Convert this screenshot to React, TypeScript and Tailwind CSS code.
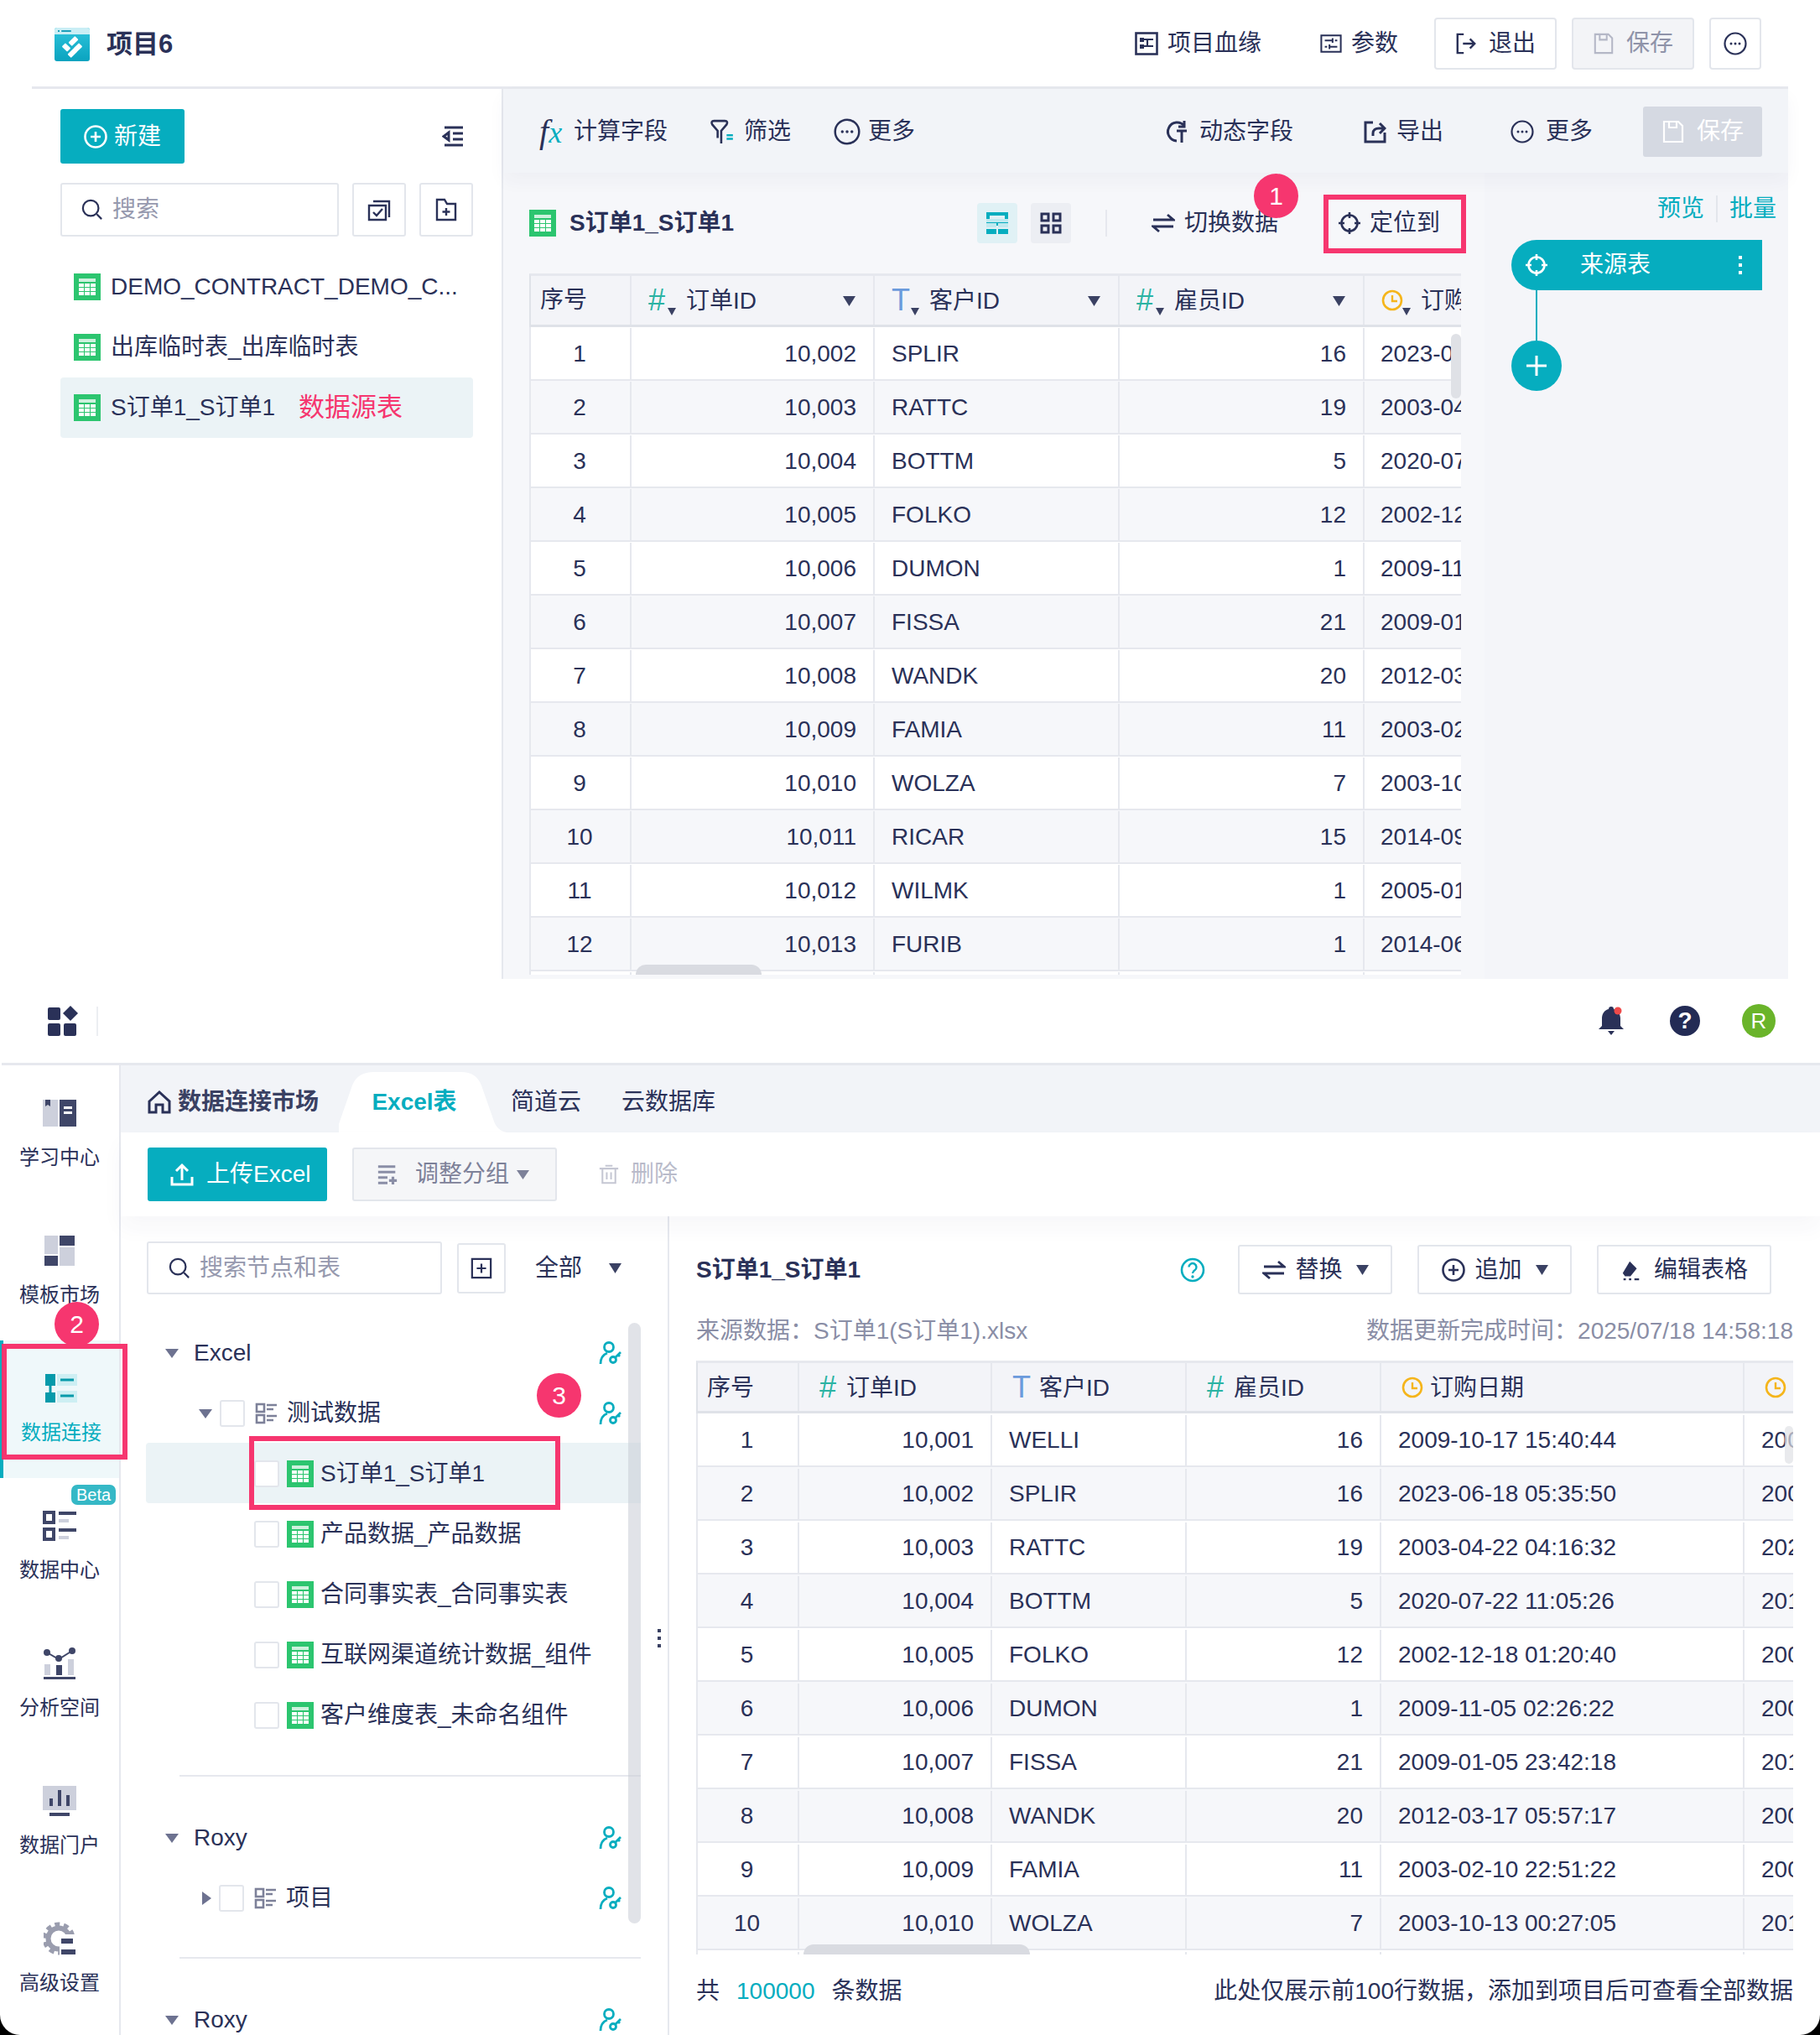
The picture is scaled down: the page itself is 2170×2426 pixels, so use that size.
import React from "react";

const NAVY = "#2a3158";
const TEAL = "#06adbf";

const topRows = [
  ["1", "10,002", "SPLIR", "16", "2023-06"],
  ["2", "10,003", "RATTC", "19", "2003-04"],
  ["3", "10,004", "BOTTM", "5", "2020-07"],
  ["4", "10,005", "FOLKO", "12", "2002-12"],
  ["5", "10,006", "DUMON", "1", "2009-11"],
  ["6", "10,007", "FISSA", "21", "2009-01"],
  ["7", "10,008", "WANDK", "20", "2012-03"],
  ["8", "10,009", "FAMIA", "11", "2003-02"],
  ["9", "10,010", "WOLZA", "7", "2003-10"],
  ["10", "10,011", "RICAR", "15", "2014-09"],
  ["11", "10,012", "WILMK", "1", "2005-01"],
  ["12", "10,013", "FURIB", "1", "2014-06"],
  ["", "", "", "", ""],
];

const bottomRows = [
  ["1", "10,001", "WELLI", "16", "2009-10-17 15:40:44", "200"],
  ["2", "10,002", "SPLIR", "16", "2023-06-18 05:35:50", "200"],
  ["3", "10,003", "RATTC", "19", "2003-04-22 04:16:32", "202"],
  ["4", "10,004", "BOTTM", "5", "2020-07-22 11:05:26", "201"],
  ["5", "10,005", "FOLKO", "12", "2002-12-18 01:20:40", "200"],
  ["6", "10,006", "DUMON", "1", "2009-11-05 02:26:22", "200"],
  ["7", "10,007", "FISSA", "21", "2009-01-05 23:42:18", "201"],
  ["8", "10,008", "WANDK", "20", "2012-03-17 05:57:17", "200"],
  ["9", "10,009", "FAMIA", "11", "2003-02-10 22:51:22", "200"],
  ["10", "10,010", "WOLZA", "7", "2003-10-13 00:27:05", "201"],
  ["", "", "", "", "", ""],
];

function Caret({ w = 15, h = 12, color = "#3a4163", dir = "down" }: { w?: number; h?: number; color?: string; dir?: string }) {
  return (
    <svg width={w} height={h} viewBox="0 0 10 10" preserveAspectRatio="none" className="shrink-0">
      <polygon points={dir === "down" ? "0,0 10,0 5,10" : "0,0 10,5 0,10"} fill={color} />
    </svg>
  );
}

function SheetIcon({ size = 32 }: { size?: number }) {
  return (
    <svg width={size} height={size} viewBox="0 0 32 32" className="shrink-0">
      <rect width="32" height="32" fill="#2cc56f" />
      <rect x="6" y="6" width="20" height="4" fill="#cdf1dd" />
      <rect x="6" y="12" width="6" height="4" fill="#fff" />
      <rect x="13" y="12" width="6" height="4" fill="#fff" />
      <rect x="20" y="12" width="6" height="4" fill="#fff" />
      <rect x="6" y="17" width="6" height="4" fill="#fff" />
      <rect x="13" y="17" width="6" height="4" fill="#fff" />
      <rect x="20" y="17" width="6" height="4" fill="#fff" />
      <rect x="6" y="22" width="6" height="4" fill="#fff" />
      <rect x="13" y="22" width="6" height="4" fill="#fff" />
      <rect x="20" y="22" width="6" height="4" fill="#fff" />
    </svg>
  );
}

function Logo() {
  return (
    <svg width="42" height="40" viewBox="0 0 42 40" className="mt-[3px] shrink-0">
      <defs>
        <linearGradient id="logoBody" x1="0" y1="0" x2="0" y2="1">
          <stop offset="0" stopColor="#2ec4dc" />
          <stop offset="1" stopColor="#0aa3bf" />
        </linearGradient>
      </defs>
      <rect width="42" height="40" rx="3" fill="url(#logoBody)" />
      <path d="M0 3a3 3 0 0 1 3-3h36a3 3 0 0 1 3 3v5H0z" fill="#c9eef5" />
      <rect x="4" y="3" width="2" height="2" fill="#1b9fba" />
      <rect x="8" y="3" width="12" height="2" rx="1" fill="#1b9fba" />
      <g fill="#fff">
        <rect x="17" y="13" width="11" height="6" rx="1" transform="rotate(-45 22.500 16)" />
        <rect x="11" y="19" width="6" height="9" rx="1" transform="rotate(-45 14 23.500)" />
        <rect x="25" y="19" width="6" height="9" rx="1" transform="rotate(45 28 23.500)" />
        <rect x="16" y="27" width="11" height="6" rx="1" transform="rotate(-45 21.500 30)" />
      </g>
    </svg>
  );
}

function Glyph({ name, size = 28, color = NAVY }: { name: string; size?: number; color?: string }) {
  const s = { fill: "none", stroke: color, strokeWidth: 2.2 };
  let body: React.ReactNode = null;
  if (name === "more") {
    body = (
      <>
        <circle cx="14" cy="14" r="12.5" {...s} />
        <circle cx="9" cy="14" r="1.5" fill={color} />
        <circle cx="14" cy="14" r="1.5" fill={color} />
        <circle cx="19" cy="14" r="1.5" fill={color} />
      </>
    );
  } else if (name === "plusCircle") {
    body = (
      <>
        <circle cx="14" cy="14" r="12.5" {...s} strokeWidth={2.6} />
        <path d="M14 8v12M8 14h12" {...s} strokeWidth={2.6} />
      </>
    );
  } else if (name === "lineage") {
    body = (
      <>
        <rect x="1.5" y="1.5" width="25" height="25" {...s} strokeWidth={2.6} />
        <rect x="6" y="7" width="5" height="5" fill={color} />
        <rect x="6" y="15" width="5" height="5" fill={color} />
        <path d="M11 9h11M11 17h11M15 9v8" {...s} />
      </>
    );
  } else if (name === "params") {
    body = (
      <>
        <rect x="1.5" y="3.5" width="25" height="21" {...s} />
        <path d="M6 10h10M19 10h3M6 18h3M12 18h10M16 7v6M12 15v6" {...s} />
      </>
    );
  } else if (name === "exit") {
    body = <path d="M11 2H3v24h8M10 14h15M19 8l6 6-6 6" {...s} strokeWidth={2.6} />;
  } else if (name === "save") {
    body = <path d="M3 2h17l5 5v19H3zM9 2v7h9V2" {...s} />;
  } else if (name === "filter") {
    body = (
      <>
        <path d="M5 2h12q4 0 2 4l-6 7v14M5 2q-4 0-2 4l6 7v8" {...s} strokeWidth={2.4} />
        <path d="M19 18h7M19 22h7" fill="none" stroke={TEAL} strokeWidth="2.4" />
      </>
    );
  } else if (name === "dynamic") {
    body = (
      <>
        <path d="M23 7a11 11 0 1 0-9 18" {...s} strokeWidth={3} />
        <path d="M14 13h12M20 13v14M23 1v7h-7" {...s} strokeWidth={3} />
      </>
    );
  } else if (name === "export") {
    body = <path d="M12 3H3v23h23V15M12 19v-3c0-4 3-6 7-6h6M20 4l6 6-6 6" {...s} strokeWidth={3} />;
  } else if (name === "swap") {
    body = <path d="M2 10h24l-7-6M26 18H2l7 6" {...s} strokeWidth={2.8} />;
  } else if (name === "locate") {
    body = (
      <>
        <circle cx="14" cy="14" r="9.5" {...s} strokeWidth={2.6} />
        <path d="M14 1v7M14 20v7M1 14h7M20 14h7" {...s} strokeWidth={2.6} />
      </>
    );
  } else if (name === "search") {
    body = <path d="M20 20l6 6M22 12a10 10 0 1 1-20 0a10 10 0 0 1 20 0z" {...s} strokeWidth={2.4} />;
  } else if (name === "collapse") {
    body = <path d="M3 3h22M13 10h12M13 17h12M3 24h22M8 9l-6 4.500 6 4.500z" {...s} strokeWidth={3} />;
  } else if (name === "check") {
    body = <path d="M7 4h19v19M2 9h20v17H2zM7 17l4 4 7-8" {...s} strokeWidth={2.4} />;
  } else if (name === "newFolder") {
    body = <path d="M3 2h9l3 5h10v19H3zM14 12v9M9.500 16.500h9" {...s} strokeWidth={2.4} />;
  } else if (name === "group") {
    body = (
      <>
        <rect x="2" y="3" width="9" height="9" fill="none" stroke={color} strokeWidth="2.6" />
        <rect x="2" y="16" width="9" height="9" fill="none" stroke={color} strokeWidth="2.6" />
        <path d="M14 4h12M14 9h8M14 17h12M14 22h8" fill="none" stroke={color} strokeWidth="2.6" />
      </>
    );
  } else if (name === "personKey") {
    body = (
      <>
        <circle cx="12" cy="7" r="5.500" fill="none" stroke={TEAL} strokeWidth="2.800" />
        <path d="M2 27c0-7 3-11 8-13" fill="none" stroke={TEAL} strokeWidth="2.800" />
        <circle cx="17" cy="22" r="3.500" fill="none" stroke={TEAL} strokeWidth="2.800" />
        <path d="M19.500 19.500L26 13M23 16l2 2" fill="none" stroke={TEAL} strokeWidth="2.800" />
      </>
    );
  } else if (name === "addBox") {
    body = <path d="M2 2h24v24H2zM14 8v12M8 14h12" {...s} strokeWidth={2.4} />;
  } else if (name === "upload") {
    body = <path d="M2 17v9h24v-9M14 21V4M7 10l7-7 7 7" {...s} strokeWidth={3} />;
  } else if (name === "regroup") {
    body = <path d="M2 4h22M2 11h22M2 18h12M2 25h12M21 17v10M16 22h10" {...s} strokeWidth={3.4} />;
  } else if (name === "trash") {
    body = <path d="M1 6h26M9 2h10M5 6v20h18V6M11 11v10M17 11v10" {...s} strokeWidth={2.4} />;
  } else if (name === "edit") {
    body = (
      <>
        <path d="M12 3l9 9-8 10H6l-3-4z" fill={color} />
        <path d="M4 26h3M11 26h3M18 26h6" {...s} />
      </>
    );
  } else if (name === "home") {
    body = <path d="M2 13L14 2l12 11v13h-8v-9h-8v9H2z" {...s} strokeWidth={3} />;
  }
  return (
    <svg width={size} height={size} viewBox="0 0 28 28" className="shrink-0">
      {body}
    </svg>
  );
}

function Clock({ size = 26 }: { size?: number }) {
  return (
    <svg width={size} height={size} viewBox="0 0 26 26" className="shrink-0">
      <circle cx="13" cy="13" r="11" fill="none" stroke="#f5b51b" strokeWidth="2.6" />
      <path d="M13 7v7h6" fill="none" stroke="#f5b51b" strokeWidth="2.4" />
    </svg>
  );
}

function TypeMark({ type }: { type: string }) {
  if (type === "#") return <span className="w-[24px] text-[36px] leading-none text-[#2bb3a3]">#</span>;
  if (type === "T") return <span className="w-[24px] text-[36px] leading-none text-[#6b9bdc]">T</span>;
  return <Clock />;
}

function HeadCell({ type, label, width, dropdown }: { type: string; label: string; width: string; dropdown: boolean }) {
  return (
    <div className={`relative flex h-full shrink-0 items-center overflow-hidden border-r-2 border-[#e6e8ee] ${width} ${dropdown ? "pl-[20px]" : "pl-[24px]"}`}>
      <TypeMark type={type} />
      {dropdown && (
        <span className="mt-[26px] ml-[-1px]">
          <Caret w={10} h={9} />
        </span>
      )}
      <span className={`pt-[2px] whitespace-nowrap ${dropdown ? "ml-[12px]" : "ml-[8px]"}`}>{label}</span>
      {dropdown && (
        <span className="absolute top-[24px] right-[21px]">
          <Caret />
        </span>
      )}
    </div>
  );
}

function TopTable() {
  return (
    <div className="relative h-[836px] w-[1111px] overflow-hidden bg-white text-[28px] leading-none">
      <div className="flex h-[64px] w-[1400px] border-y-[3px] border-l-2 border-[#dfe2e8] border-t-[#e6e8ee] bg-[#f3f4f8]">
        <div className="flex h-full w-[120px] shrink-0 items-center border-r-2 border-[#e6e8ee] pl-[11px]">序号</div>
        <HeadCell type="#" label="订单ID" width="w-[290px]" dropdown />
        <HeadCell type="T" label="客户ID" width="w-[292px]" dropdown />
        <HeadCell type="#" label="雇员ID" width="w-[292px]" dropdown />
        <HeadCell type="clock" label="订购日期" width="w-[300px]" dropdown />
      </div>
      {topRows.map((r, i) => (
        <div key={i} className={`flex h-[64px] w-[1400px] border-b-2 border-l-2 border-[#e6e8ee] pt-[1px] ${i % 2 ? "bg-[#f6f7fa]" : "bg-white"}`}>
          <div className="flex w-[120px] shrink-0 items-center justify-center border-r-2 border-[#e6e8ee] pr-[2px]">{r[0]}</div>
          <div className="flex w-[290px] shrink-0 items-center justify-end border-r-2 border-[#e6e8ee] pr-[20px]">{r[1]}</div>
          <div className="flex w-[292px] shrink-0 items-center border-r-2 border-[#e6e8ee] pl-[20px]">{r[2]}</div>
          <div className="flex w-[292px] shrink-0 items-center justify-end border-r-2 border-[#e6e8ee] pr-[20px]">{r[3]}</div>
          <div className="flex w-[300px] shrink-0 items-center pl-[19px]">{r[4]}</div>
        </div>
      ))}
      <div className="absolute top-[72px] right-0 h-[77px] w-[12px] rounded-full bg-[#dfe1e6]" />
      <div className="absolute right-[834px] bottom-0 h-[12px] w-[150px] rounded-t-full bg-[#d9dbe1]" />
    </div>
  );
}

function BottomTable() {
  return (
    <div className="relative h-[708px] w-[1308px] overflow-hidden bg-white text-[28px] leading-none">
      <div className="flex h-[63px] w-[1500px] border-y-[3px] border-l-2 border-[#dfe2e8] border-t-[#e6e8ee] bg-[#f3f4f8]">
        <div className="flex h-full w-[121px] shrink-0 items-center border-r-2 border-[#e6e8ee] pt-[2px] pl-[11px]">序号</div>
        <HeadCell type="#" label="订单ID" width="w-[230px]" dropdown={false} />
        <HeadCell type="T" label="客户ID" width="w-[232px]" dropdown={false} />
        <HeadCell type="#" label="雇员ID" width="w-[232px]" dropdown={false} />
        <HeadCell type="clock" label="订购日期" width="w-[433px]" dropdown={false} />
        <HeadCell type="clock" label="要求日期" width="w-[200px]" dropdown={false} />
      </div>
      {bottomRows.map((r, i) => (
        <div key={i} className={`flex h-[64px] w-[1500px] border-b-2 border-l-2 border-[#e6e8ee] pt-[2px] ${i % 2 ? "bg-[#f6f7fa]" : "bg-white"}`}>
          <div className="flex w-[121px] shrink-0 items-center justify-center border-r-2 border-[#e6e8ee] pr-[2px]">{r[0]}</div>
          <div className="flex w-[230px] shrink-0 items-center justify-end border-r-2 border-[#e6e8ee] pr-[20px]">{r[1]}</div>
          <div className="flex w-[232px] shrink-0 items-center border-r-2 border-[#e6e8ee] pl-[20px]">{r[2]}</div>
          <div className="flex w-[232px] shrink-0 items-center justify-end border-r-2 border-[#e6e8ee] pr-[20px]">{r[3]}</div>
          <div className="flex w-[433px] shrink-0 items-center border-r-2 border-[#e6e8ee] pl-[20px] whitespace-nowrap">{r[4]}</div>
          <div className="flex w-[200px] shrink-0 items-center pl-[20px]">{r[5]}</div>
        </div>
      ))}
      <div className="absolute top-[78px] right-0 h-[45px] w-[10px] rounded-full bg-[#dfe1e6]/70" />
      <div className="absolute right-[910px] bottom-0 h-[12px] w-[270px] rounded-t-full bg-[#d9dbe1]" />
    </div>
  );
}

function TopSection() {
  return (
    <div className="h-[1167px] px-[38px]">
      <header className="flex h-[106px] items-center border-b-[3px] border-[#e6e8ee] pr-[32px] pl-[27px]">
        <Logo />
        <span className="mt-[3px] ml-[20px] text-[31px] font-bold">项目6</span>
        <div className="ml-auto flex items-center text-[28px]">
          <Glyph name="lineage" />
          <span className="ml-[11px]">项目血缘</span>
          <span className="ml-[70px]">
            <Glyph name="params" size={26} />
          </span>
          <span className="ml-[11px]">参数</span>
          <div className="ml-[43px] flex h-[62px] w-[146px] items-center justify-center gap-[14px] rounded-[4px] border-2 border-[#e3e6ec]">
            <Glyph name="exit" size={26} />
            退出
          </div>
          <div className="ml-[18px] flex h-[62px] w-[146px] items-center justify-center gap-[14px] rounded-[4px] border-2 border-[#e3e6ec] bg-[#f3f4f7] text-[#8f93a9]">
            <Glyph name="save" size={26} color="#b4b7c6" />
            保存
          </div>
          <div className="ml-[18px] flex h-[62px] w-[62px] items-center justify-center rounded-[4px] border-2 border-[#e3e6ec]">
            <Glyph name="more" />
          </div>
        </div>
      </header>
      <div className="flex h-[1061px]">
        <aside className="w-[562px] shrink-0 border-r-2 border-[#e6e8ee] px-[34px] pt-[24px] text-[28px]">
          <div className="flex h-[65px] items-center justify-between pr-[9px]">
            <div className="flex h-[65px] w-[148px] items-center justify-center gap-[8px] rounded-[3px] bg-[#06adbf] text-white">
              <Glyph name="plusCircle" color="#fff" />
              新建
            </div>
            <Glyph name="collapse" />
          </div>
          <div className="mt-[23px] flex h-[64px] gap-[16px]">
            <div className="flex w-[332px] items-center gap-[11px] rounded-[3px] border-2 border-[#e3e6ec] pl-[23px] text-[#9699ae]">
              <Glyph name="search" size={26} />
              搜索
            </div>
            <div className="flex w-[64px] items-center justify-center rounded-[3px] border-2 border-[#e3e6ec]">
              <Glyph name="check" />
            </div>
            <div className="flex w-[64px] items-center justify-center rounded-[3px] border-2 border-[#e3e6ec]">
              <Glyph name="newFolder" />
            </div>
          </div>
          <div className="mt-[24px] flex h-[72px] items-center gap-[12px] pl-[16px]">
            <SheetIcon />
            DEMO_CONTRACT_DEMO_C...
          </div>
          <div className="flex h-[72px] items-center gap-[12px] pl-[16px]">
            <SheetIcon />
            出库临时表_出库临时表
          </div>
          <div className="flex h-[72px] items-center gap-[12px] rounded-[4px] bg-[#ebf3f6] pl-[16px]">
            <SheetIcon />
            S订单1_S订单1
            <span className="ml-[16px] text-[31px] text-[#f6366f]">数据源表</span>
          </div>
        </aside>
        <div className="flex w-[1533px] flex-col bg-[#f6f7fa]">
          <div className="relative z-10 flex h-[100px] shrink-0 items-center bg-[#f2f4f8] pt-[2px] pr-[31px] pl-[43px] text-[28px] shadow-[0_10px_20px_rgba(40,50,90,0.04)]">
            <span className="w-[32px] font-['Liberation_Serif'] text-[40px] leading-none italic">
              f<span className="text-[36px] text-[#06adbf]">x</span>
            </span>
            <span className="ml-[9px]">计算字段</span>
            <span className="ml-[50px]">
              <Glyph name="filter" size={30} />
            </span>
            <span className="ml-[11px]">筛选</span>
            <span className="ml-[51px]">
              <Glyph name="more" size={32} />
            </span>
            <span className="ml-[9px]">更多</span>
            <span className="ml-auto">
              <Glyph name="dynamic" size={28} />
            </span>
            <span className="ml-[13px]">动态字段</span>
            <span className="ml-[83px]">
              <Glyph name="export" />
            </span>
            <span className="ml-[12px]">导出</span>
            <span className="ml-[80px]">
              <Glyph name="more" />
            </span>
            <span className="ml-[14px]">更多</span>
            <div className="ml-[60px] flex h-[60px] w-[142px] items-center justify-center gap-[14px] rounded-[3px] bg-[#d5d9e2] text-white">
              <Glyph name="save" color="#fff" />
              保存
            </div>
          </div>
          <div className="flex min-h-0 flex-1">
            <div className="w-[1170px] shrink-0 pl-[31px]">
              <div className="flex h-[120px] items-center text-[28px]">
                <SheetIcon />
                <span className="ml-[16px] font-bold">S订单1_S订单1</span>
                <div className="ml-[290px] flex h-[48px] w-[48px] items-center justify-center rounded-[4px] bg-[#e0f1f5]">
                  <svg width="26" height="26" viewBox="0 0 26 26">
                    <path d="M0 0h26v16H0zM4 4v7h18V4z" fill="#06adbf" />
                    <rect x="0" y="8" width="26" height="4" fill="#bfe9ef" />
                    <rect x="0" y="13" width="12" height="5" fill="#bfe9ef" />
                    <rect x="14" y="13" width="12" height="5" fill="#bfe9ef" />
                    <rect x="0" y="20" width="12" height="6" fill="#06adbf" />
                    <rect x="14" y="20" width="12" height="6" fill="#06adbf" />
                  </svg>
                </div>
                <div className="ml-[16px] flex h-[48px] w-[48px] items-center justify-center rounded-[4px] bg-[#eceef3]">
                  <svg width="26" height="26" viewBox="0 0 26 26" fill="none" stroke={NAVY} strokeWidth="3">
                    <rect x="2" y="2" width="8" height="8" />
                    <rect x="16" y="2" width="8" height="8" />
                    <rect x="2" y="16" width="8" height="8" />
                    <rect x="16" y="16" width="8" height="8" />
                  </svg>
                </div>
                <div className="ml-[41px] h-[32px] w-[2px] bg-[#e6e8ee]" />
                <span className="ml-[53px]">
                  <Glyph name="swap" />
                </span>
                <span className="ml-[11px]">切换数据</span>
                <span className="ml-[71px]">
                  <Glyph name="locate" />
                </span>
                <span className="ml-[10px]">定位到</span>
              </div>
              <TopTable />
            </div>
            <div className="flex-1 bg-[#f4f5f9] pt-[27px] pr-[31px] pl-[32px]">
              <div className="flex items-center justify-end text-[28px] leading-none text-[#06adbf]">
                <span>预览</span>
                <span className="mx-[14px] h-[32px] w-[2px] bg-[#e3e6ec]" />
                <span className="mr-[-17px]">批量</span>
              </div>
              <div className="mt-[21px] flex h-[60px] items-center rounded-r-[3px] rounded-l-full bg-[#06adbf] pr-[24px] pl-[16px] text-[28px] text-white">
                <Glyph name="locate" color="#fff" />
                <span className="ml-[38px]">来源表</span>
                <span className="ml-auto flex flex-col gap-[5px]">
                  <span className="h-[4px] w-[4px] bg-white" />
                  <span className="h-[4px] w-[4px] bg-white" />
                  <span className="h-[4px] w-[4px] bg-white" />
                </span>
              </div>
              <div className="ml-[29px] h-[60px] w-[2px] bg-[#06adbf]" />
              <div className="flex h-[60px] w-[60px] items-center justify-center rounded-full bg-[#06adbf]">
                <svg width="24" height="24" viewBox="0 0 24 24">
                  <path d="M12 0v24M0 12h24" stroke="#fff" strokeWidth="3" />
                </svg>
              </div>
            </div>
          </div>
        </div>
      </div>
    </div>
  );
}

function NavIcon({ name }: { name: string }) {
  const d = "#3f4668";
  const l = "#cdd0dc";
  if (name === "learn")
    return (
      <svg width="40" height="32" viewBox="0 0 40 32">
        <rect x="0" y="0" width="18" height="32" fill={l} />
        <path d="M3 0h6v8l-3-2-3 2z" fill={d} />
        <rect x="20" y="0" width="20" height="32" fill={d} />
        <rect x="25" y="8" width="10" height="3" fill="#fff" />
        <rect x="25" y="14" width="10" height="3" fill="#fff" />
      </svg>
    );
  if (name === "tpl")
    return (
      <svg width="36" height="36" viewBox="0 0 36 36">
        <rect width="16" height="22" fill={l} />
        <rect y="24" width="16" height="12" fill={d} />
        <rect x="18" width="18" height="12" fill={d} />
        <rect x="18" y="14" width="18" height="22" fill={l} />
      </svg>
    );
  if (name === "conn")
    return (
      <svg width="38" height="34" viewBox="0 0 38 34">
        <rect x="14" y="0" width="24" height="14" fill="#cdeff3" />
        <rect x="14" y="20" width="24" height="14" fill="#cdeff3" />
        <rect x="0" y="0" width="12" height="14" fill="#069aaa" />
        <rect x="0" y="22" width="12" height="12" fill="#069aaa" />
        <path d="M6 14v12M18 7h16M18 26h16" stroke="#069aaa" strokeWidth="3" fill="none" />
      </svg>
    );
  if (name === "center")
    return (
      <svg width="40" height="36" viewBox="0 0 40 36">
        <rect x="2" y="2" width="11" height="12" fill="none" stroke={d} strokeWidth="4" />
        <rect x="2" y="22" width="11" height="12" fill="none" stroke={d} strokeWidth="4" />
        <rect x="19" y="1" width="21" height="4" fill={d} />
        <rect x="19" y="10" width="12" height="4" fill={l} />
        <rect x="19" y="21" width="21" height="4" fill={d} />
        <rect x="19" y="30" width="12" height="4" fill={l} />
      </svg>
    );
  if (name === "analysis")
    return (
      <svg width="38" height="38" viewBox="0 0 38 38">
        <path d="M4 6l14 8 16-10" stroke={d} strokeWidth="2" fill="none" />
        <circle cx="4" cy="6" r="4" fill={d} />
        <circle cx="18" cy="13" r="4" fill={d} />
        <circle cx="34" cy="4" r="4" fill={d} />
        <rect x="1" y="20" width="7" height="13" fill={l} />
        <rect x="15" y="21" width="7" height="12" fill={d} />
        <rect x="29" y="14" width="7" height="19" fill={l} />
        <rect y="35" width="38" height="3" fill={d} />
      </svg>
    );
  if (name === "portal")
    return (
      <svg width="40" height="36" viewBox="0 0 40 36">
        <rect width="40" height="29" fill={l} />
        <rect x="8" y="15" width="4" height="9" fill={d} />
        <rect x="18" y="5" width="4" height="19" fill={d} />
        <rect x="28" y="11" width="4" height="13" fill={d} />
        <rect x="8" y="32" width="24" height="4" fill={d} />
      </svg>
    );
  return (
    <svg width="38" height="40" viewBox="0 0 38 40">
      <circle cx="18" cy="20" r="12.500" fill="none" stroke="#9a9dae" strokeWidth="6" />
      <circle cx="18" cy="20" r="17" fill="none" stroke="#9a9dae" strokeWidth="5" strokeDasharray="6 4.700" />
      <rect x="19" y="15" width="19" height="25" fill="#fff" />
      <rect x="21" y="20" width="14" height="6" fill={d} />
      <rect x="21" y="33" width="17" height="6" fill={d} />
    </svg>
  );
}

const navItems = [
  ["learn", "学习中心"],
  ["tpl", "模板市场"],
  ["conn", "数据连接"],
  ["center", "数据中心"],
  ["analysis", "分析空间"],
  ["portal", "数据门户"],
  ["gear", "高级设置"],
];

function Sidebar() {
  return (
    <nav className="h-[1156px] w-[144px] shrink-0 border-r-2 border-[#e6e8ee] text-[24px] leading-none">
      {navItems.map(([icon, label]) => (
        <div
          key={icon}
          className={`flex h-[164px] flex-col items-center ${icon === "conn" ? "border-l-4 border-[#06adbf] bg-[#eff8fa] text-[#06adbf]" : ""}`}
        >
          <div className="mt-[37px] flex h-[40px] items-center">
            <NavIcon name={icon} />
          </div>
          <span className="mt-[21px]">{label}</span>
        </div>
      ))}
    </nav>
  );
}

function Check() {
  return <span className="h-[32px] w-[30px] shrink-0 rounded-[3px] border-2 border-[#e3e6ec] bg-white" />;
}

function TreeRow({ pad, caret, box, icon, label, active }: { pad: string; caret?: string; box?: boolean; icon?: string; label: string; active?: boolean }) {
  return (
    <div className={`flex h-[72px] items-center pt-[2px] ${pad} ${active ? "rounded-l-[4px] bg-[#ebf3f6]" : ""}`}>
      {caret && <Caret w={caret === "right" ? 11 : 16} h={caret === "right" ? 16 : 11} color="#6d7290" dir={caret} />}
      {caret && box && <span className="w-[9px]" />}
      {box && <Check />}
      {icon === "group" && (
        <span className="ml-[12px]">
          <Glyph name="group" size={28} color="#7d8199" />
        </span>
      )}
      {icon === "sheet" && (
        <span className="ml-[9px]">
          <SheetIcon />
        </span>
      )}
      <span className={icon === "group" ? "ml-[10px]" : icon === "sheet" ? "ml-[8px]" : "ml-[18px]"}>{label}</span>
      {!active && icon !== "sheet" && (
        <span className="mr-[22px] ml-auto">
          <Glyph name="personKey" size={28} />
        </span>
      )}
    </div>
  );
}

function BottomSection() {
  return (
    <div className="bg-black">
      <div className="h-[1259px] overflow-hidden rounded-b-[24px] bg-white">
        <header className="ml-[2px] flex h-[103px] items-center border-b-[3px] border-[#e6e8ee] pr-[53px] pl-[55px]">
          <svg width="36" height="36" viewBox="0 0 36 36">
            <rect x="0" y="2" width="15" height="15" rx="2" fill={NAVY} />
            <path d="M27 0l9 9-9 9-9-9z" fill={NAVY} />
            <rect x="0" y="21" width="15" height="15" rx="2" fill={NAVY} />
            <rect x="19" y="21" width="15" height="15" rx="2" fill={NAVY} />
          </svg>
          <div className="ml-[22px] h-[35px] w-[2px] bg-[#eceef2]" />
          <div className="ml-auto flex items-center">
            <svg width="30" height="34" viewBox="0 0 30 34">
              <path d="M15 0c2 0 3 1 3 3 5 1 8 6 8 11v9l4 4H0l4-4v-9c0-5 3-10 8-11 0-2 1-3 3-3z" fill={NAVY} />
              <path d="M11 29h8l-4 5z" fill={NAVY} />
              <circle cx="23" cy="5" r="4.500" fill="#ee4a4a" />
            </svg>
            <div className="ml-[55px] flex h-[36px] w-[36px] items-center justify-center rounded-full bg-[#232b55] text-[28px] leading-none font-bold text-white">?</div>
            <div className="ml-[50px] flex h-[40px] w-[40px] items-center justify-center rounded-full bg-[#6ab42a] text-[26px] leading-none text-white">R</div>
          </div>
        </header>
        <div className="flex">
          <Sidebar />
          <div className="w-[2026px] shrink-0">
            <div className="flex h-[80px] items-center bg-[#f2f4f8] pt-[8px] pl-[32px] text-[28px]">
              <Glyph name="home" />
              <span className="ml-[8px] font-bold text-[#3a4163]">数据连接市场</span>
              <div className="relative ml-[24px] mt-[-8px] flex h-[72px] w-[180px] items-center justify-center self-end font-bold text-[#06adbf]">
                <svg width="200" height="72" viewBox="0 0 200 72" className="absolute top-0 left-0">
                  <path d="M0 72V62L16 16Q22 0 42 0H146Q164 0 170 16L184 56Q188 70 200 72Z" fill="#fff" />
                </svg>
                <span className="relative">Excel表</span>
              </div>
              <span className="ml-[25px]">简道云</span>
              <span className="ml-[48px]">云数据库</span>
            </div>
            <div className="relative z-10 flex h-[100px] items-center bg-white pl-[32px] text-[28px] shadow-[0_14px_24px_rgba(40,50,90,0.04)]">
              <div className="flex h-[64px] w-[214px] items-center gap-[15px] rounded-[3px] bg-[#06adbf] pl-[27px] text-white">
                <Glyph name="upload" size={28} color="#fff" />
                上传Excel
              </div>
              <div className="ml-[30px] flex h-[64px] w-[244px] items-center rounded-[3px] border-2 border-[#e3e6ec] bg-[#f5f6f8] pl-[27px] text-[#7d8199]">
                <Glyph name="regroup" size={26} color="#8a8ea6" />
                <span className="ml-[20px]">调整分组</span>
                <span className="ml-[9px]">
                  <Caret w={15} h={11} color="#7d8199" />
                </span>
              </div>
              <span className="ml-[50px]">
                <Glyph name="trash" size={24} color="#c5c7d3" />
              </span>
              <span className="ml-[14px] text-[#b9bbca]">删除</span>
            </div>
            <div className="flex h-[976px] text-[28px]">
              <div className="relative w-[654px] shrink-0 border-r-2 border-[#e6e8ee] pt-[30px] pl-[31px]">
                <div className="flex h-[63px] items-center">
                  <div className="flex h-[63px] w-[352px] items-center gap-[11px] rounded-[3px] border-2 border-[#e3e6ec] pl-[24px] text-[#9699ae]">
                    <Glyph name="search" size={26} />
                    搜索节点和表
                  </div>
                  <div className="ml-[18px] flex h-[60px] w-[58px] items-center justify-center rounded-[3px] border-2 border-[#e3e6ec]">
                    <Glyph name="addBox" size={26} />
                  </div>
                  <span className="ml-[35px]">全部</span>
                  <span className="ml-[32px]">
                    <Caret />
                  </span>
                </div>
                <div className="mt-[33px] ml-[-1px] w-[590px] overflow-hidden">
                  <TreeRow pad="pl-[23px]" caret="down" label="Excel" />
                  <TreeRow pad="pl-[63px]" caret="down" box icon="group" label="测试数据" />
                  <TreeRow pad="pl-[129px]" box icon="sheet" label="S订单1_S订单1" active />
                  <TreeRow pad="pl-[129px]" box icon="sheet" label="产品数据_产品数据" />
                  <TreeRow pad="pl-[129px]" box icon="sheet" label="合同事实表_合同事实表" />
                  <TreeRow pad="pl-[129px]" box icon="sheet" label="互联网渠道统计数据_组件" />
                  <TreeRow pad="pl-[129px]" box icon="sheet" label="客户维度表_未命名组件" />
                  <div className="my-[36px] ml-[40px] h-[2px] bg-[#e6e8ee]" />
                  <TreeRow pad="pl-[23px]" caret="down" label="Roxy" />
                  <TreeRow pad="pl-[67px]" caret="right" box icon="group" label="项目" />
                  <div className="mt-[35px] mb-[36px] ml-[40px] h-[2px] bg-[#e6e8ee]" />
                  <TreeRow pad="pl-[23px]" caret="down" label="Roxy" />
                </div>
                <div className="absolute top-[127px] left-[605px] h-[716px] w-[15px] rounded-full bg-[#c9ccd6]/55" />
                <div className="absolute top-[492px] left-[640px] flex flex-col gap-[5px]">
                  <span className="h-[4px] w-[4px] bg-[#3a4163]" />
                  <span className="h-[4px] w-[4px] bg-[#3a4163]" />
                  <span className="h-[4px] w-[4px] bg-[#3a4163]" />
                </div>
              </div>
              <div className="w-[1340px] pl-[32px]">
                <div className="mt-[34px] flex h-[59px] items-center">
                  <span className="font-bold">S订单1_S订单1</span>
                  <svg width="30" height="30" viewBox="0 0 30 30" className="ml-[381px]">
                    <circle cx="15" cy="15" r="13" fill="none" stroke="#06adbf" strokeWidth="2.600" />
                    <path d="M10.500 11.500a4.500 4.500 0 1 1 7 3.800c-1.500 1-2.500 1.700-2.500 3.700" fill="none" stroke="#06adbf" strokeWidth="2.400" />
                    <circle cx="15" cy="23" r="1.700" fill="#06adbf" />
                  </svg>
                  <div className="ml-[39px] flex h-[59px] w-[184px] items-center justify-center rounded-[3px] border-2 border-[#e3e6ec]">
                    <Glyph name="swap" />
                    <span className="mr-[16px] ml-[12px]">替换</span>
                    <Caret />
                  </div>
                  <div className="ml-[30px] flex h-[59px] w-[184px] items-center justify-center rounded-[3px] border-2 border-[#e3e6ec]">
                    <Glyph name="plusCircle" />
                    <span className="mr-[16px] ml-[12px]">追加</span>
                    <Caret />
                  </div>
                  <div className="ml-[30px] flex h-[59px] w-[208px] items-center justify-center rounded-[3px] border-2 border-[#e3e6ec]">
                    <Glyph name="edit" size={26} />
                    <span className="ml-[14px]">编辑表格</span>
                  </div>
                </div>
                <div className="mt-[28px] flex h-[32px] w-[1308px] items-center justify-between text-[#8a8ea6]">
                  <span>来源数据：S订单1(S订单1).xlsx</span>
                  <span>数据更新完成时间：2025/07/18 14:58:18</span>
                </div>
                <div className="mt-[19px]">
                  <BottomTable />
                </div>
                <div className="mt-[28px] flex h-[32px] w-[1308px] items-center">
                  <span>共</span>
                  <span className="ml-[20px] text-[#06adbf]">100000</span>
                  <span className="ml-[20px]">条数据</span>
                  <span className="ml-auto">此处仅展示前100行数据，添加到项目后可查看全部数据</span>
                </div>
              </div>
            </div>
          </div>
        </div>
      </div>
    </div>
  );
}

function Badge({ n, pos }: { n: string; pos: string }) {
  return <div className={`absolute z-20 flex h-[53px] w-[53px] items-center justify-center rounded-full bg-[#f6366f] text-[30px] leading-none text-white ${pos}`}>{n}</div>;
}

export default function App() {
  return (
    <div className="relative h-[2426px] w-[2170px] overflow-hidden bg-white font-['Liberation_Sans','Noto_Sans_CJK_SC',sans-serif] text-[#2a3158]">
      <TopSection />
      <BottomSection />
      <div className="absolute top-[232px] left-[1578px] z-20 h-[70px] w-[170px] border-[6px] border-[#f6366f]" />
      <div className="absolute top-[1602px] left-[2px] z-20 h-[138px] w-[150px] border-[6px] border-[#f6366f]" />
      <div className="absolute top-[1712px] left-[297px] z-20 h-[88px] w-[371px] border-[6px] border-[#f6366f]" />
      <Badge n="1" pos="top-[207px] left-[1495px]" />
      <Badge n="2" pos="top-[1552px] left-[65px]" />
      <Badge n="3" pos="top-[1637px] left-[640px]" />
      <div className="absolute top-[1770px] left-[85px] z-10 flex h-[24px] w-[53px] items-center justify-center rounded-[7px] bg-[#35b8c6] text-[20px] leading-none text-white">Beta</div>
    </div>
  );
}
